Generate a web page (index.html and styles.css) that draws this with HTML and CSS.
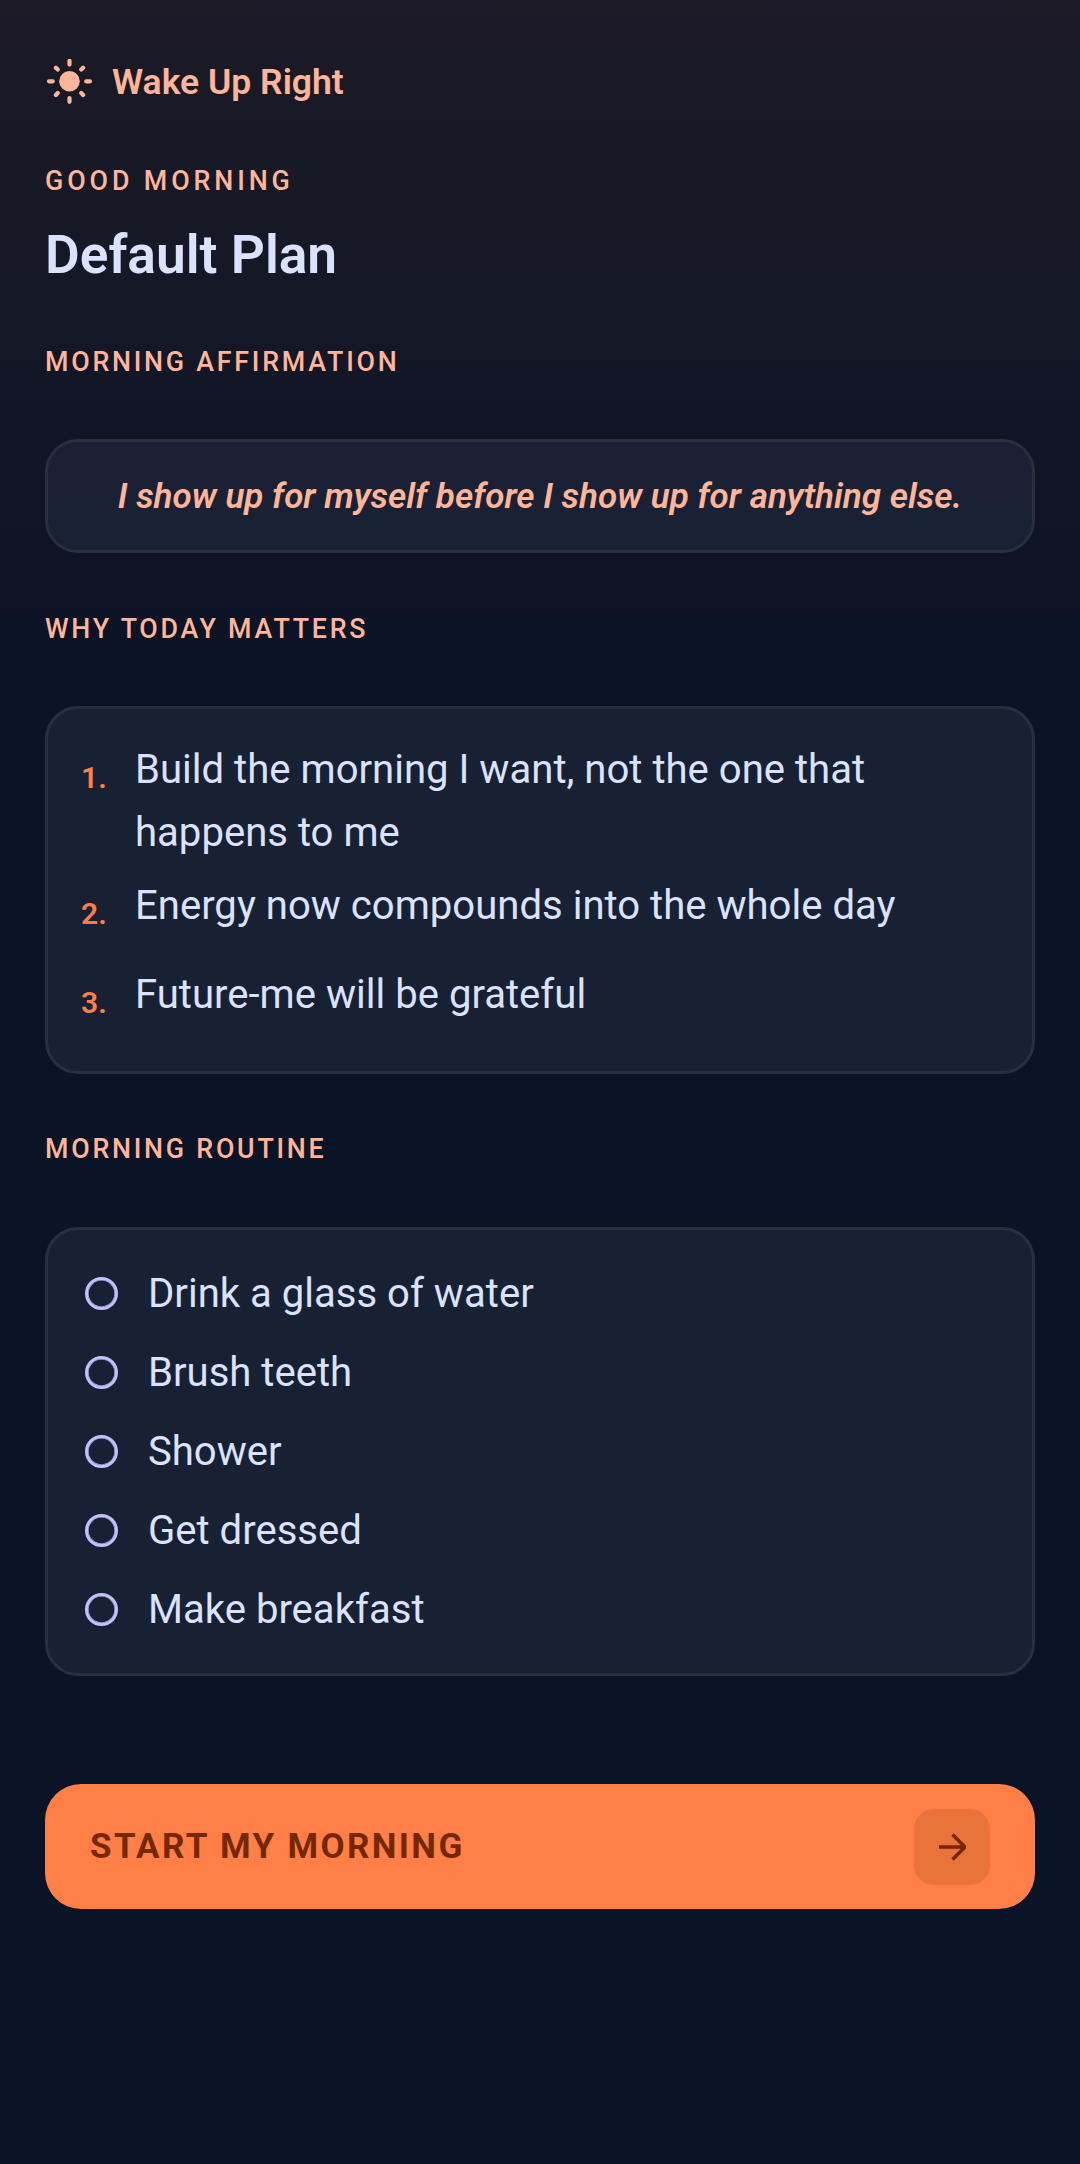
FILE: index.html
```html
<!DOCTYPE html>
<html lang="en">
<head>
<meta charset="utf-8">
<title>Wake Up Right</title>
<link rel="stylesheet" href="styles.css">
</head>
<body>
<main class="page">
  <header class="brand">
    <svg class="sun" viewBox="0 0 48 46" width="48" height="46" aria-hidden="true">
      <circle cx="24.500" cy="22.300" r="10.300" fill="#ffb59a"/>
      <g stroke="#ffb59a" stroke-width="4.200" stroke-linecap="round" fill="none">
        <path d="M24.500 1.800v3.800M24.500 39v3.800M4 22.300h3.800M41.200 22.300h3.800M10.900 8.700l1.800 1.800M36.300 34.100l1.800 1.800M10.900 35.900l1.800-1.800M36.300 10.500l1.800-1.800"/>
      </g>
    </svg>
    <span class="brand-name">Wake Up Right</span>
  </header>
  <p class="label greeting">GOOD MORNING</p>
  <h1 class="title">Default Plan</h1>
  <p class="label section">MORNING AFFIRMATION</p>
  <div class="card affirmation">I show up for myself before I show up for anything else.</div>
  <p class="label section">WHY TODAY MATTERS</p>
  <ol class="card reasons">
    <li class="reason"><span class="num">1.</span><span class="reason-text">Build the morning I want, not the one that happens to me</span></li>
    <li class="reason"><span class="num">2.</span><span class="reason-text">Energy now compounds into the whole day</span></li>
    <li class="reason"><span class="num">3.</span><span class="reason-text">Future-me will be grateful</span></li>
  </ol>
  <p class="label section">MORNING ROUTINE</p>
  <ul class="card routine">
    <li class="task"><span class="radio"></span>Drink a glass of water</li>
    <li class="task"><span class="radio"></span>Brush teeth</li>
    <li class="task"><span class="radio"></span>Shower</li>
    <li class="task"><span class="radio"></span>Get dressed</li>
    <li class="task"><span class="radio"></span>Make breakfast</li>
  </ul>
  <button class="start" type="button">
    <span>START MY MORNING</span>
    <span class="start-icon">
      <svg viewBox="0 0 28 28" width="28" height="28" aria-hidden="true"><path d="M1 14h26M14.500 1.500L27 14 14.500 26.500" fill="none" stroke="#752800" stroke-width="3.400"/></svg>
    </span>
  </button>
</main>
</body>
</html>
```

FILE: styles.css
```css
* { box-sizing: border-box; }
html, body { margin: 0; padding: 0; }
body {
  width: 1080px;
  height: 2164px;
  background: linear-gradient(180deg, #1c1b26 0px, #0b1326 650px, #0b1326 100%);
  font-family: Roboto, "Liberation Sans", sans-serif;
  color: #dae2fd;
}
.page { padding: 59px 45px 0; }
.brand { display: flex; align-items: center; gap: 19px; height: 46px; }
.sun { flex: none; }
.brand-name { font-size: 35.500px; font-weight: 600; color: #ffb59a; line-height: 46px; }
.label { margin: 0; font-size: 26.800px; font-weight: 500; letter-spacing: 2.750px; color: #ffb59a; line-height: 33px; }
.greeting { margin-top: 60px; letter-spacing: 3.900px; }
.title { margin: 24px 0 0; font-size: 53.300px; font-weight: 600; line-height: 66px; color: #dae2fd; }
.section { margin-top: 0; }
.page > .title + .section { margin-top: 58px; }
.card { margin: 0; background: rgba(34,42,61,.6); border: 3px solid #272f41; border-radius: 33px; list-style: none; }
.affirmation { margin-top: 60px; margin-bottom: 60px; height: 114px; display: flex; align-items: center; justify-content: center; font-size: 35px; font-style: italic; font-weight: 600; color: #ffb59a; }
.reasons { margin-top: 60px; margin-bottom: 59px; padding: 29px 33px 29px; }
.reason { display: flex; }
.reason + .reason { margin-top: 10px; }
.num { width: 54px; height: 79px; flex: none; font-size: 30px; font-weight: 600; color: #ff7f46; line-height: 64px; padding-top: 8px; }
.reason-text { font-size: 40.100px; line-height: 63px; }
.routine { margin-top: 61px; padding: 24.500px 37px 19px; height: 449px; }
.task { display: flex; align-items: center; gap: 30px; height: 78.800px; font-size: 40.100px; }
.radio { width: 33px; height: 33px; border: 3px solid #c3c0ff; box-shadow: inset 0 0 0 .6px #c3c0ff; border-radius: 50%; flex: none; }
.start { margin-top: 108px; width: 990px; height: 125px; border: 0; border-radius: 36px; background: #ff7f46; display: flex; align-items: center; justify-content: space-between; padding: 0 45px; font-family: inherit; font-size: 35px; font-weight: 700; letter-spacing: 2.350px; color: #752800; }
.start-icon { width: 76px; height: 76px; border-radius: 20px; background: rgba(117,40,0,.15); display: flex; align-items: center; justify-content: center; }
```
